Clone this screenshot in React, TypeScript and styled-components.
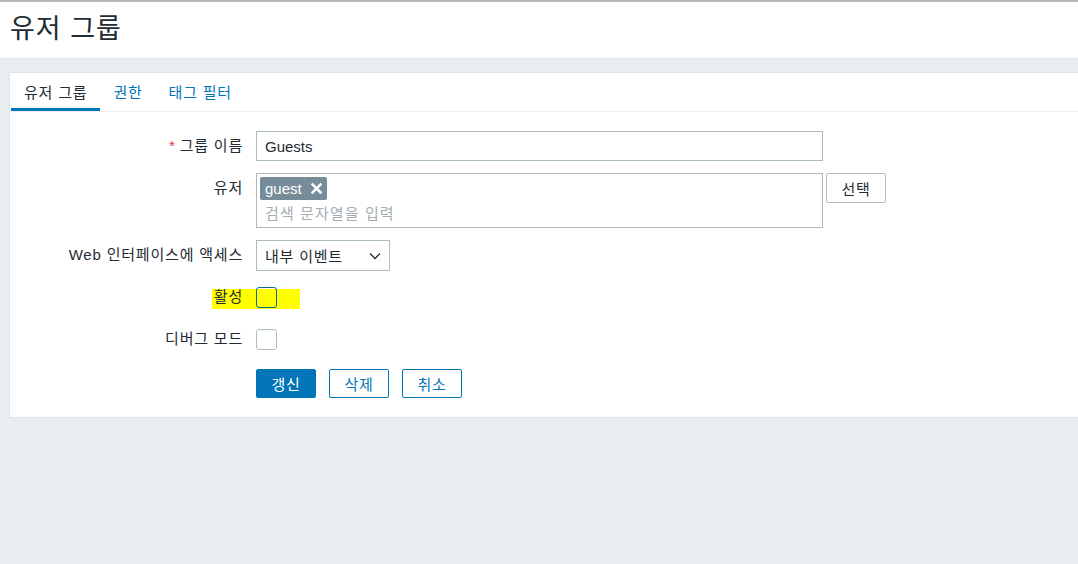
import React from "react";
import styled, { createGlobalStyle } from "styled-components";

const GlobalStyle = createGlobalStyle`
  html, body { margin: 0; padding: 0; }
  body {
    background: #ebeef0;
    font-family: "Liberation Sans", "Noto Sans CJK KR", Arial, sans-serif;
    font-size: 15px;
    color: #1f2c33;
    overflow: hidden;
  }
  * { box-sizing: border-box; }
`;

const Page = styled.div`
  min-height: 564px;
  border-top: 2px solid #b9babb;
`;

const Header = styled.header`
  height: 57px;
  background: #ffffff;
  border-bottom: 1px solid #dfe4e7;
  display: flex;
  align-items: center;
  padding-left: 10px;
`;

const Title = styled.h1`
  margin: 0;
  font-size: 27px;
  font-weight: normal;
  letter-spacing: 1px;
  color: #1f2c33;
  line-height: 1;
  padding-bottom: 2px;
`;

const Main = styled.main`
  padding: 13px 0 0 9px;
`;

const Panel = styled.section`
  background: #ffffff;
  border: 1px solid #dfe4e7;
  border-right: none;
`;

const TabNav = styled.nav`
  display: flex;
  height: 39px;
  padding-left: 1px;
  border-bottom: 1px solid #ebeef0;
`;

const Tab = styled.div<{ $active?: boolean }>`
  padding: 1px 13px 0 13px;
  display: flex;
  align-items: center;
  letter-spacing: 0.8px;
  color: ${(p) => (p.$active ? "#1f2c33" : "#0275b8")};
  border-bottom: 3px solid ${(p) => (p.$active ? "#0275b8" : "transparent")};
`;

const Form = styled.div`
  padding: 19px 0 19px 0;
  display: flex;
  flex-direction: column;
`;

const Row = styled.div<{ $mt?: number; $h?: number }>`
  position: relative;
  display: flex;
  margin-top: ${(p) => p.$mt ?? 0}px;
  min-height: ${(p) => p.$h ?? 30}px;
`;

const Label = styled.label`
  position: relative;
  z-index: 1;
  width: 233px;
  flex: none;
  height: 30px;
  line-height: 30px;
  text-align: right;
  margin-right: 13px;
  white-space: nowrap;
  letter-spacing: 0.8px;
`;

const Req = styled.span`
  color: #e33734;
  margin-right: 4px;
`;

const Field = styled.div<{ $top?: boolean }>`
  position: relative;
  z-index: 1;
  display: flex;
  align-items: ${(p) => (p.$top ? "flex-start" : "center")};
  gap: 3px;
`;

const TextInput = styled.div`
  width: 567px;
  height: 30px;
  border: 1px solid #acbbc2;
  padding: 0 8px;
  display: flex;
  align-items: center;
  color: #1f2c33;
`;

const MultiSelect = styled.div`
  width: 567px;
  height: 55px;
  border: 1px solid #acbbc2;
  padding: 3px 3px 0 3px;
  display: flex;
  flex-direction: column;
`;

const TagChip = styled.span`
  align-self: flex-start;
  display: inline-flex;
  align-items: center;
  gap: 9px;
  height: 23px;
  padding: 0 5px;
  background: #768d99;
  color: #ffffff;
  border-radius: 2px;
`;

const Placeholder = styled.span`
  color: #a4adb2;
  padding-left: 5px;
  margin-top: 3px;
  line-height: 22px;
  letter-spacing: 1.1px;
`;

const GreyButton = styled.button`
  width: 60px;
  height: 30px;
  background: #ffffff;
  border: 1px solid #acbbc2;
  border-radius: 2px;
  color: #1f2c33;
  font: inherit;
  letter-spacing: 0.8px;
  padding: 0;
`;

const Select = styled.div`
  width: 134px;
  height: 31px;
  border: 1px solid #acbbc2;
  padding: 0 8px;
  display: flex;
  align-items: center;
  justify-content: space-between;
  letter-spacing: 0.8px;
`;

const Check = styled.span<{ $focus?: boolean }>`
  display: inline-block;
  width: 21px;
  height: 21px;
  border: 1px solid ${(p) => (p.$focus ? "#0b6a8f" : "#acbbc2")};
  border-radius: 3px;
  background: ${(p) => (p.$focus ? "transparent" : "#ffffff")};
`;

const Highlight = styled.span`
  position: absolute;
  left: 202px;
  top: 7px;
  width: 88px;
  height: 20px;
  background: #ffff00;
  z-index: 0;
`;

const ButtonRow = styled.div`
  display: flex;
  gap: 13px;
  margin-top: 15px;
  padding-left: 246px;
`;

const Btn = styled.button<{ $primary?: boolean }>`
  width: 60px;
  height: 29px;
  border-radius: 2px;
  font: inherit;
  letter-spacing: 0.8px;
  padding: 0;
  border: 1px solid #0275b8;
  background: ${(p) => (p.$primary ? "#0275b8" : "#ffffff")};
  color: ${(p) => (p.$primary ? "#ffffff" : "#0275b8")};
`;

const Chevron = () => (
  <svg width="12" height="8" viewBox="0 0 12 8">
    <path d="M1 1.5 L6 6.5 L11 1.5" fill="none" stroke="#1f2c33" strokeWidth="1.3" />
  </svg>
);

const Cross = () => (
  <svg width="11" height="11" viewBox="0 0 11 11">
    <path d="M1.5 1.5 L9.5 9.5 M9.5 1.5 L1.5 9.5" stroke="#ffffff" strokeWidth="2.6" strokeLinecap="square" />
  </svg>
);

export default function App() {
  return (
    <>
      <GlobalStyle />
      <Page>
        <Header>
          <Title>유저 그룹</Title>
        </Header>
        <Main>
          <Panel>
            <TabNav>
              <Tab $active>유저 그룹</Tab>
              <Tab>권한</Tab>
              <Tab>태그 필터</Tab>
            </TabNav>
            <Form>
              <Row>
                <Label>
                  <Req>*</Req>그룹 이름
                </Label>
                <Field>
                  <TextInput>Guests</TextInput>
                </Field>
              </Row>
              <Row $mt={12} $h={55}>
                <Label>유저</Label>
                <Field $top>
                  <MultiSelect>
                    <TagChip>
                      guest <Cross />
                    </TagChip>
                    <Placeholder>검색 문자열을 입력</Placeholder>
                  </MultiSelect>
                  <GreyButton>선택</GreyButton>
                </Field>
              </Row>
              <Row $mt={12} $h={31}>
                <Label>Web 인터페이스에 액세스</Label>
                <Field>
                  <Select>
                    <span>내부 이벤트</span>
                    <Chevron />
                  </Select>
                </Field>
              </Row>
              <Row $mt={11}>
                <Highlight />
                <Label>활성</Label>
                <Field>
                  <Check $focus />
                </Field>
              </Row>
              <Row $mt={12}>
                <Label>디버그 모드</Label>
                <Field>
                  <Check />
                </Field>
              </Row>
              <ButtonRow>
                <Btn $primary>갱신</Btn>
                <Btn>삭제</Btn>
                <Btn>취소</Btn>
              </ButtonRow>
            </Form>
          </Panel>
        </Main>
      </Page>
    </>
  );
}
